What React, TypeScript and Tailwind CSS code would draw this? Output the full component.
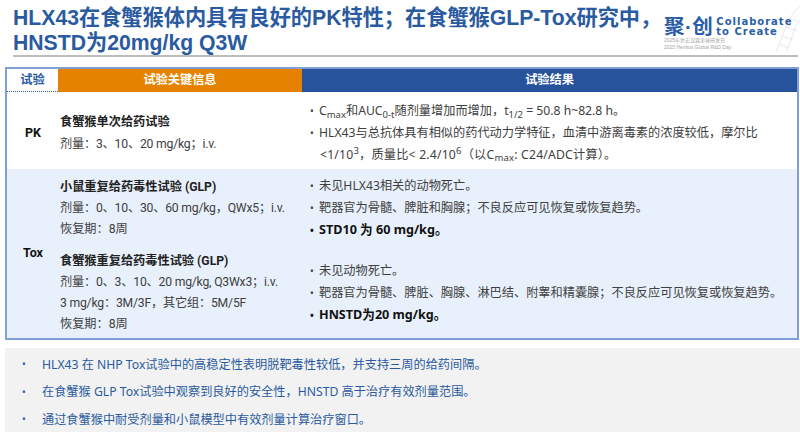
const cjk = "font-['Liberation_Sans','Noto_Sans_CJK_SC',sans-serif]";
const body = "font-['Roboto','Noto_Sans_CJK_SC',sans-serif]";
const noto = "font-['Noto_Sans','Noto_Sans_CJK_SC',sans-serif]";

function Bullet({ children, bold, className }: { children: React.ReactNode; bold?: boolean; className?: string }) {
  return (
    <div className={`flex items-center whitespace-nowrap ${className ?? "h-[22px]"} ${bold ? "text-[12.6px] font-bold text-[#111]" : ""}`}>
      <span className="w-[9px] shrink-0 text-[10px]">•</span>
      <span>{children}</span>
    </div>
  );
}

function Logo() {
  return (
    <div className="relative h-[48px] w-[134px] shrink-0">
      <svg className="absolute -right-[2px] top-[6px]" width="26" height="46" viewBox="0 0 26 46" fill="none" stroke="#e6e8f1" strokeWidth="1">
        <path d="M26 0C12 12 10 28 2 46" />
        <path d="M26 14C18 24 18 36 12 46" />
        <path d="M16 12l9 4M12 21l11 4M9 30l10 4M6 38l9 4" />
      </svg>
      <div className="relative flex items-center pt-[16px]">
        <span className={`${cjk} text-[20.5px] font-bold leading-[22px] tracking-[0.5px] text-[#2a5ea8]`}>聚·创</span>
        <div className="ml-[3px] font-['DejaVu_Sans',sans-serif] text-[10px] font-bold leading-[10px] tracking-[1px] text-[#2a5ea8]">
          <div>Collaborate</div>
          <div>to Create</div>
        </div>
      </div>
      <div className={`relative ${cjk} -mt-[1px] text-[5px] leading-[6.5px] text-[#a5a5a5]`}>
        <div>2025年复宏汉霖全球研发日</div>
        <div>2025 Henlius Global R&amp;D Day</div>
      </div>
    </div>
  );
}

export default function App() {
  return (
    <div className={`h-[434px] w-[800px] overflow-hidden bg-white ${body}`}>
      {/* Title */}
      <div className="ml-[13px] mr-[2px] flex h-[57px] items-start justify-between border-b-2 border-[#bdbdbd]">
        <h1 className={`${cjk} whitespace-nowrap pt-[5px] text-[21.2px] font-bold leading-[25px] text-[#2a5a9f]`}>
          <div>HLX43在食蟹猴体内具有良好的PK特性；在食蟹猴GLP-Tox研究中，</div>
          <div>HNSTD为20mg/kg Q3W</div>
        </h1>
        <Logo />
      </div>

      {/* Table */}
      <div className="ml-[5px] mr-[1px] mt-[10px] h-[273px] border-2 border-[#7f9fd6] text-[12.2px] text-[#404040]">
        <div className="flex h-[23px] items-center text-center text-[12.2px] font-bold text-white">
          <div className="h-full w-[51px] border-b border-dotted border-[#2a5a9f] text-[#2a5a9f]">
            <span className="leading-[22px]">试验</span>
          </div>
          <div className="h-full w-[244px] bg-[#e58300] leading-[23px]">试验关键信息</div>
          <div className="h-full flex-1 bg-[#27539c] leading-[23px]">试验结果</div>
        </div>

        {/* PK */}
        <div className="flex h-[77px] items-center pt-[5px]">
          <div className="w-[51px] pl-[1px] text-center text-[12.5px] font-bold text-[#111]">PK</div>
          <div className="w-[244px] pl-[2px]">
            <div className="font-bold leading-[22px] text-[#222]">食蟹猴单次给药试验</div>
            <div className="leading-[22px] tracking-[-0.2px]">剂量：3、10、20 mg/kg；i.v.</div>
          </div>
          <div className={`flex-1 pl-[8px] ${noto}`}>
            <Bullet className="h-[21.5px]">
              C<sub className="text-[9.5px]">max</sub>和AUC<sub className="text-[9.5px]">0-t</sub>随剂量增加而增加，t
              <sub className="text-[9.5px]">1/2</sub> = 50.8 h~82.8 h。
            </Bullet>
            <Bullet className="h-[21.5px]">HLX43与总抗体具有相似的药代动力学特征，血清中游离毒素的浓度较低，摩尔比</Bullet>
            <div className="h-[21.5px] whitespace-nowrap pl-[10px] leading-[21.5px] tracking-[0.2px]">
              &lt;1/10<sup className="text-[9.5px]">3</sup>，质量比&lt; 2.4/10<sup className="text-[9.5px]">6</sup>（以C
              <sub className="text-[9.5px]">max</sub>: C24/ADC计算）。
            </div>
          </div>
        </div>

        {/* Tox */}
        <div className="flex h-[169px] bg-[#e8f0fb]">
          <div className="flex w-[51px] items-center justify-center pl-[1px] text-[12.5px] font-bold text-[#111]">Tox</div>
          <div className="w-[244px] pl-[2px] pt-[8px] leading-[21px]">
            <div className="font-bold text-[#222]">小鼠重复给药毒性试验 (GLP)</div>
            <div className="tracking-[-0.2px]">剂量：0、10、30、60 mg/kg，QWx5；i.v.</div>
            <div>恢复期：8周</div>
            <div className="mt-[11px] font-bold text-[#222]">食蟹猴重复给药毒性试验 (GLP)</div>
            <div className="tracking-[-0.2px]">剂量：0、3、10、20 mg/kg, Q3Wx3；i.v.</div>
            <div className="tracking-[-0.2px]">3 mg/kg：3M/3F，其它组：5M/5F</div>
            <div>恢复期：8周</div>
          </div>
          <div className={`flex-1 pl-[8px] pt-[6px] ${noto}`}>
            <Bullet>未见HLX43相关的动物死亡。</Bullet>
            <Bullet>靶器官为骨髓、脾脏和胸腺；不良反应可见恢复或恢复趋势。</Bullet>
            <Bullet bold>STD10 为 60 mg/kg。</Bullet>
            <div className="mt-[19px]">
              <Bullet>未见动物死亡。</Bullet>
              <Bullet>靶器官为骨髓、脾脏、胸腺、淋巴结、附睾和精囊腺；不良反应可见恢复或恢复趋势。</Bullet>
              <Bullet bold>HNSTD为20 mg/kg。</Bullet>
            </div>
          </div>
        </div>
      </div>

      {/* Takeaways */}
      <div className={`ml-[5px] mt-[8px] h-[84px] bg-[#f2f2f2] pt-[3px] text-[12.2px] text-[#2a5a9f] ${noto}`}>
        {[
          "HLX43 在 NHP Tox试验中的高稳定性表明脱靶毒性较低，并支持三周的给药间隔。",
          "在食蟹猴 GLP Tox试验中观察到良好的安全性，HNSTD 高于治疗有效剂量范围。",
          "通过食蟹猴中耐受剂量和小鼠模型中有效剂量计算治疗窗口。",
        ].map((line) => (
          <div key={line} className="flex h-[27.5px] items-center whitespace-nowrap">
            <span className="w-[37px] pl-[17px] text-[10px]">•</span>
            <span>{line}</span>
          </div>
        ))}
      </div>
    </div>
  );
}
